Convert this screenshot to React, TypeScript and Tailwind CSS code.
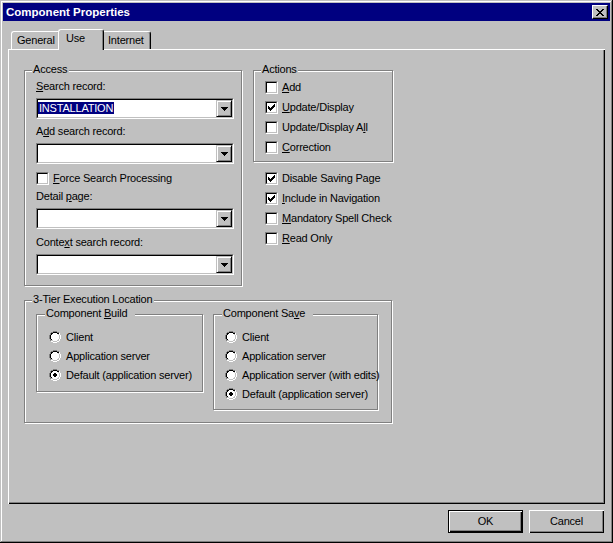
import type { ReactNode } from "react"

const CHECK = ["......X", ".....XX", "X...XXX", "XX.XXX.", "XXXXX..", ".XXX...", "..X...."]

const RADIO = [
  "....GGGG....",
  "..GGKKKKGG..",
  ".GKKFFFFKKW.",
  ".GKFFFFFFLW.",
  "GKFFFFFFFFLW",
  "GKFFFFFFFFLW",
  "GKFFFFFFFFLW",
  "GKFFFFFFFFLW",
  ".GKFFFFFFLW.",
  ".GLLFFFFLLW.",
  "..WWLLLLWW..",
  "....WWWW....",
]

const DOT = [
  "............",
  "............",
  "............",
  "............",
  ".....XX.....",
  "....XXXX....",
  "....XXXX....",
  ".....XX.....",
  "............",
  "............",
  "............",
  "............",
]

const CLOSE_X = ["XX....XX", ".XX..XX.", "..XXXX..", "...XX...", "..XXXX..", ".XX..XX.", "XX....XX"]

const ARROW = ["XXXXXXX", ".XXXXX.", "..XXX..", "...X..."]

const PALETTE: Record<string, string> = {
  G: "#808080",
  K: "#000000",
  W: "#ffffff",
  L: "#c0c0c0",
  F: "#ffffff",
  X: "#000000",
}

function Bitmap({ rows }: { rows: string[] }) {
  const w = rows[0].length
  const h = rows.length
  return (
    <svg width={w} height={h} viewBox={`0 0 ${w} ${h}`} shapeRendering="crispEdges" className="block shrink-0">
      {rows.flatMap((row, y) =>
        row.split("").map((c, x) =>
          PALETTE[c] ? <rect key={`${x}-${y}`} x={x} y={y} width={1} height={1} fill={PALETTE[c]} /> : null
        )
      )}
    </svg>
  )
}

function Checkbox({ checked }: { checked?: boolean }) {
  return (
    <span className="flex h-[13px] w-[13px] shrink-0 border border-t-[#808080] border-l-[#808080] border-b-white border-r-white">
      <span className="flex h-full w-full items-center justify-center border border-t-black border-l-black border-b-[#c0c0c0] border-r-[#c0c0c0] bg-white">
        {checked && <Bitmap rows={CHECK} />}
      </span>
    </span>
  )
}

function CheckRow({ checked, children }: { checked?: boolean; children: ReactNode }) {
  return (
    <div className="flex h-[13px] items-center gap-[4px]">
      <Checkbox checked={checked} />
      <span className="whitespace-nowrap">{children}</span>
    </div>
  )
}

function Radio({ checked, children }: { checked?: boolean; children: ReactNode }) {
  return (
    <div className="flex h-[12px] items-center gap-[5px]">
      <span className="relative h-[12px] w-[12px] shrink-0">
        <Bitmap rows={RADIO} />
        {checked && (
          <span className="absolute left-0 top-0">
            <Bitmap rows={DOT} />
          </span>
        )}
      </span>
      <span className="whitespace-nowrap leading-[12px]">{children}</span>
    </div>
  )
}

function DropButton() {
  return (
    <div className="flex h-[17px] w-[16px] shrink-0 items-center justify-center border border-t-[#c0c0c0] border-l-[#c0c0c0] border-b-black border-r-black bg-[#c0c0c0] shadow-[inset_1px_1px_0_#fff,inset_-1px_-1px_0_#808080]">
      <Bitmap rows={ARROW} />
    </div>
  )
}

function Combo({ value }: { value?: string }) {
  return (
    <div className="flex h-[21px] w-[198px] border border-t-[#808080] border-l-[#808080] border-b-white border-r-white">
      <div className="flex flex-1 items-center border border-t-black border-l-black border-b-[#c0c0c0] border-r-[#c0c0c0] bg-white">
        <div className="flex-1">
          {value && <span className="bg-[#000080] px-[1px] text-white">{value}</span>}
        </div>
        <DropButton />
      </div>
    </div>
  )
}

function Group({
  label,
  labelClass,
  className,
  children,
}: {
  label: ReactNode
  labelClass: string
  className: string
  children: ReactNode
}) {
  return (
    <div className={`relative shrink-0 border border-[#808080] shadow-[inset_1px_1px_0_#fff,1px_1px_0_#fff] ${className}`}>
      <span className={`absolute top-[-8px] whitespace-nowrap bg-[#c0c0c0] ${labelClass}`}>{label}</span>
      {children}
    </div>
  )
}

function Tab({ label, selected, className }: { label: string; selected?: boolean; className: string }) {
  return (
    <div
      className={`relative rounded-t-[3px] border-l border-t border-r border-l-white border-t-white border-r-black bg-[#c0c0c0] pt-[2px] shadow-[inset_-1px_0_0_#808080] ${
        selected ? "z-10 -mb-[1px] h-[21px]" : "h-[18px]"
      } ${className}`}
    >
      {label}
    </div>
  )
}

function Button({ label, isDefault }: { label: string; isDefault?: boolean }) {
  return (
    <button
      className={
        isDefault
          ? "h-[23px] w-[75px] border border-black bg-[#c0c0c0] shadow-[inset_1px_1px_0_#fff,inset_-1px_-1px_0_#000,inset_-2px_-2px_0_#808080]"
          : "h-[23px] w-[75px] bg-[#c0c0c0] shadow-[inset_1px_1px_0_#fff,inset_-1px_-1px_0_#000,inset_-2px_-2px_0_#808080]"
      }
    >
      {label}
    </button>
  )
}

export default function App() {
  return (
    <div className="h-[543px] w-[613px] bg-[#c0c0c0] p-[3px] font-['Liberation_Sans',Arial,sans-serif] text-[11px] leading-[13px] tracking-[-0.2px] text-black shadow-[inset_-1px_-1px_0_#000,inset_1px_1px_0_#c0c0c0,inset_-2px_-2px_0_#808080,inset_2px_2px_0_#fff]">
      {/* Title bar */}
      <div className="flex h-[18px] items-center justify-between bg-[#000080] px-[2px]">
        <span className="pl-[1px] text-[11.5px] font-bold tracking-normal text-white">Component Properties</span>
        <div className="flex h-[14px] w-[16px] items-center justify-center border border-t-white border-l-white border-b-black border-r-black bg-[#c0c0c0] shadow-[inset_-1px_-1px_0_#808080]">
          <Bitmap rows={CLOSE_X} />
        </div>
      </div>

      <div className="ml-[5px] mt-[8px]">
        {/* Tabs */}
        <div className="flex h-[20px] items-end pl-[3px]">
          <Tab label="General" className="w-[50px] pl-[5px]" />
          <Tab label="Use" selected className="-ml-[3px] w-[46px] pl-[7px]" />
          <Tab label="Internet" className="-ml-[2px] w-[49px] pl-[5px]" />
        </div>

        {/* Tab page */}
        <div className="h-[455px] w-[597px] pl-[16px] pt-[21px] shadow-[inset_1px_1px_0_#fff,inset_-1px_-1px_0_#000,inset_-2px_-2px_0_#808080]">
          <div className="flex items-start gap-[11px]">
            <Group label="Access" labelClass="left-[7px] px-[1px] pr-[2px]" className="h-[216px] w-[218px]">
              <div className="flex flex-col items-start pl-[11px] pt-[9px]">
                <span>
                  <u>S</u>earch record:
                </span>
                <div className="mt-[5px]">
                  <Combo value="INSTALLATION" />
                </div>
                <span className="mt-[6px]">
                  A<u>d</u>d search record:
                </span>
                <div className="mt-[5px]">
                  <Combo />
                </div>
                <div className="mt-[8px]">
                  <CheckRow>
                    <u>F</u>orce Search Processing
                  </CheckRow>
                </div>
                <span className="mt-[5px]">
                  Detail <u>p</u>age:
                </span>
                <div className="mt-[5px]">
                  <Combo />
                </div>
                <span className="mt-[7px]">
                  Conte<u>x</u>t search record:
                </span>
                <div className="mt-[5px]">
                  <Combo />
                </div>
              </div>
            </Group>

            <div className="flex flex-col">
              <Group label="Actions" labelClass="left-[7px] px-[1px]" className="h-[92px] w-[140px]">
                <div className="flex flex-col gap-[7px] pl-[11px] pt-[10px]">
                  <CheckRow>
                    <u>A</u>dd
                  </CheckRow>
                  <CheckRow checked>
                    <u>U</u>pdate/Display
                  </CheckRow>
                  <CheckRow>
                    Update/Display A<u>l</u>l
                  </CheckRow>
                  <CheckRow>
                    <u>C</u>orrection
                  </CheckRow>
                </div>
              </Group>
              <div className="mt-[10px] flex flex-col gap-[7px] pl-[12px]">
                <CheckRow checked>Disable Saving Page</CheckRow>
                <CheckRow checked>
                  <u>I</u>nclude in Navigation
                </CheckRow>
                <CheckRow>
                  <u>M</u>andatory Spell Check
                </CheckRow>
                <CheckRow>
                  <u>R</u>ead Only
                </CheckRow>
              </div>
            </div>
          </div>

          <div className="mt-[14px]">
            <Group label="3-Tier Execution Location" labelClass="left-[7px] px-[1px] pr-[2px]" className="h-[123px] w-[368px]">
              <div className="flex items-start gap-[10px] pl-[11px] pt-[13px]">
                <Group
                  label={
                    <>
                      Component <u>B</u>uild
                    </>
                  }
                  labelClass="left-[8px] pl-[1px] pr-[8px]"
                  className="h-[78px] w-[167px]"
                >
                  <div className="flex flex-col gap-[7px] pl-[12px] pt-[16px]">
                    <Radio>Client</Radio>
                    <Radio>Application server</Radio>
                    <Radio checked>Default (application server)</Radio>
                  </div>
                </Group>
                <Group
                  label={
                    <>
                      Component Sa<u>v</u>e
                    </>
                  }
                  labelClass="left-[8px] pl-[1px] pr-[8px]"
                  className="h-[96px] w-[165px]"
                >
                  <div className="flex flex-col gap-[7px] pl-[11px] pt-[16px]">
                    <Radio>Client</Radio>
                    <Radio>Application server</Radio>
                    <Radio>Application server (with edits)</Radio>
                    <Radio checked>Default (application server)</Radio>
                  </div>
                </Group>
              </div>
            </Group>
          </div>
        </div>
      </div>

      {/* Buttons */}
      <div className="mt-[6px] flex justify-end gap-[6px] pr-[6px]">
        <Button label="OK" isDefault />
        <Button label="Cancel" />
      </div>
    </div>
  )
}
